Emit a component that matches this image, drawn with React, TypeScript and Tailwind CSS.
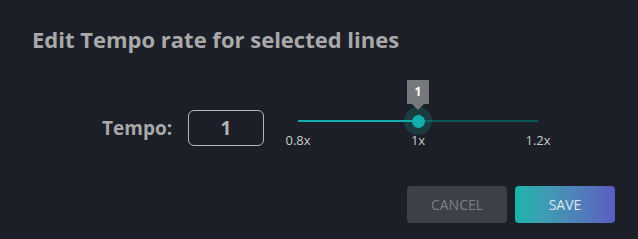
export default function App() {
  const min = 0.8;
  const max = 1.2;
  const value = 1;
  const pct = ((value - min) / (max - min)) * 100;

  return (
    <div
      className="w-[638px] h-[239px] bg-[#1c1f27] flex flex-col"
      style={{ fontFamily: '"Open Sans", "Liberation Sans", sans-serif' }}
    >
      <h2 className="pl-[32px] pt-[24px] text-[22px] leading-[30px] font-bold text-[#a9a9a9]">
        Edit Tempo rate for selected lines
      </h2>

      {/* Tempo row */}
      <div className="flex items-center pl-[102px] mt-[56px] h-[36px]">
        <span className="text-[19px] font-bold text-[#a9a9a9] w-[86px]">Tempo:</span>
        <div className="w-[76px] h-[36px] rounded-[6px] border border-[#b4b4b4] flex items-center justify-center text-[19px] font-bold text-[#b4b4b4]">
          1
        </div>

        {/* slider */}
        <div className="relative ml-[34px] w-[240px] h-[36px]">
          <div className="absolute left-0 right-0 top-[10px] h-[2px] bg-[#0e5559]" />
          <div
            className="absolute left-0 top-[10px] h-[2px] bg-[#13adac]"
            style={{ width: `${pct}%` }}
          />
          <div
            className="absolute top-[11px] -translate-x-1/2 -translate-y-1/2 w-[28px] h-[28px] rounded-full bg-[#13adac]/20 flex items-center justify-center"
            style={{ left: `${pct}%` }}
          >
            <div className="w-[13px] h-[13px] rounded-full bg-[#13adac]" />
          </div>
          <div
            className="absolute top-[-30px] -translate-x-1/2 flex flex-col items-center"
            style={{ left: `${pct}%` }}
          >
            <div className="w-[22px] h-[24px] bg-[#777a7d] text-white text-[12px] font-bold flex items-center justify-center">
              1
            </div>
            <div className="w-0 h-0 border-l-[6px] border-r-[6px] border-t-[6px] border-l-transparent border-r-transparent border-t-[#777a7d]" />
          </div>
          <span className="absolute top-[22px] left-0 -translate-x-1/2 text-[13px] text-[#c8c8c8] leading-[16px]">0.8x</span>
          <span className="absolute top-[22px] left-1/2 -translate-x-1/2 text-[13px] text-[#c8c8c8] leading-[16px]">1x</span>
          <span className="absolute top-[22px] left-full -translate-x-1/2 text-[13px] text-[#c8c8c8] leading-[16px]">1.2x</span>
        </div>
      </div>

      {/* buttons */}
      <div className="flex justify-end gap-[8px] pr-[23px] mt-[40px]">
        <button className="w-[100px] h-[37px] rounded-[4px] bg-[#3d4048] text-[14px] text-[#7d7f84] uppercase">
          Cancel
        </button>
        <button className="w-[100px] h-[37px] rounded-[4px] bg-gradient-to-r from-[#17b5aa] to-[#5a5cc0] text-[14px] text-[#dde6f0] uppercase">
          Save
        </button>
      </div>
    </div>
  );
}
